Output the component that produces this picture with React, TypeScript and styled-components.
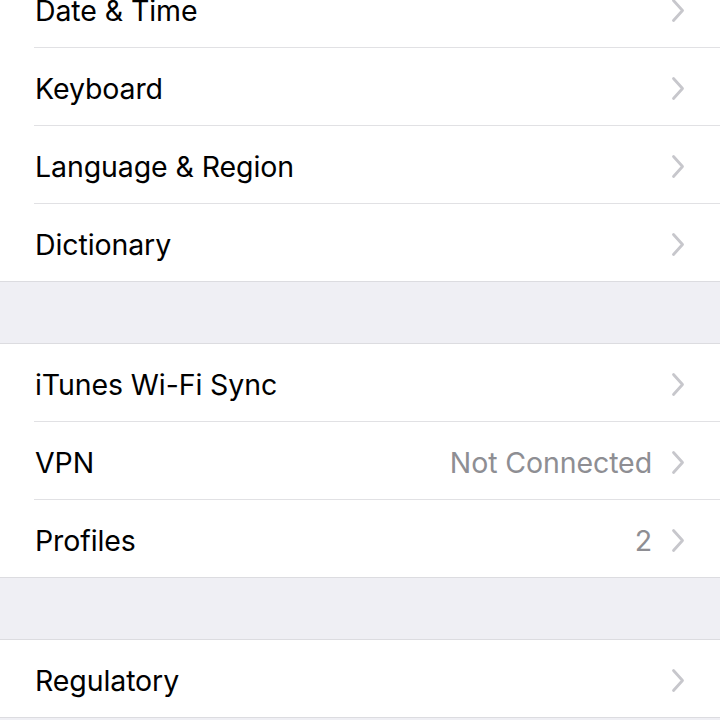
import styled, { createGlobalStyle } from "styled-components";

const GlobalStyle = createGlobalStyle`
  html, body {
    margin: 0;
    padding: 0;
    background: #efeff4;
    overflow: hidden;
  }
  body {
    font-family: Inter, "Liberation Sans", Arial, sans-serif;
    -webkit-font-smoothing: antialiased;
  }
`;

type Item = { label: string; value?: string };

const groups: Item[][] = [
  [
    { label: "Date & Time" },
    { label: "Keyboard" },
    { label: "Language & Region" },
    { label: "Dictionary" },
  ],
  [
    { label: "iTunes Wi-Fi Sync" },
    { label: "VPN", value: "Not Connected" },
    { label: "Profiles", value: "2" },
  ],
  [{ label: "Regulatory" }],
];

function Chevron() {
  return (
    <ChevronIcon width="14" height="25" viewBox="0 0 14 25">
      <path
        d="M2.5 2.5 L11.5 12.5 L2.5 22.5"
        fill="none"
        stroke="#c7c7cc"
        strokeWidth="2.8"
        strokeLinecap="round"
        strokeLinejoin="round"
      />
    </ChevronIcon>
  );
}

export default function App() {
  return (
    <>
      <GlobalStyle />
      <Screen>
        <List>
          {groups.map((items, gi) => (
            <Group key={gi}>
              {items.map((item, i) => (
                <Row key={item.label} $last={i === items.length - 1}>
                  <Label>{item.label}</Label>
                  {item.value && <Value>{item.value}</Value>}
                  <Chevron />
                </Row>
              ))}
            </Group>
          ))}
        </List>
      </Screen>
    </>
  );
}

const Screen = styled.div`
  width: 720px;
  height: 720px;
  overflow: hidden;
  background: #efeff4;
`;

const List = styled.div`
  display: flex;
  flex-direction: column;
  gap: 61px;
  margin-top: -31px;
`;

const Group = styled.div`
  background: #ffffff;
  border-top: 1px solid #dcdce0;
  border-bottom: 1px solid #dcdce0;
  padding-left: 34px;
`;

const Row = styled.div<{ $last: boolean }>`
  display: flex;
  align-items: center;
  padding: 3px 35px 0 2px;
  box-sizing: border-box;
  border-bottom: ${(p) => (p.$last ? "none" : "1px solid #e1e1e4")};
  height: ${(p) => (p.$last ? "77px" : "78px")};
`;

const Label = styled.span`
  flex: 1;
  font-size: 28.5px;
  font-weight: 400;
  color: #000000;
  letter-spacing: -0.1px;
  margin-left: -1px;
`;

const Value = styled.span`
  font-size: 28.5px;
  color: #8e8e93;
  margin-right: 19px;
  letter-spacing: -0.1px;
`;

const ChevronIcon = styled.svg`
  display: block;
  flex-shrink: 0;
`;
